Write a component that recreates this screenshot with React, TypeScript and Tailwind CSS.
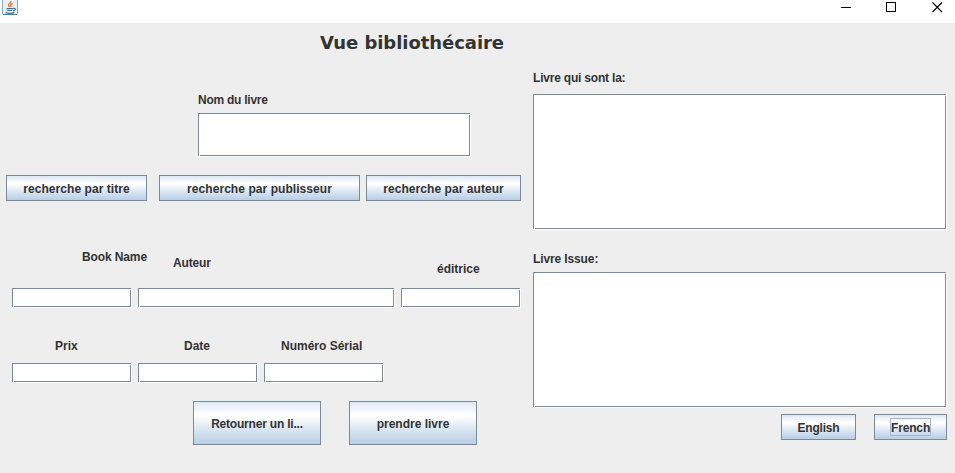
import type { ReactNode } from 'react';

function Label({ className = '', children }: { className?: string; children: ReactNode }) {
  return <span className={`block whitespace-nowrap text-[12px] leading-4 font-bold ${className}`}>{children}</span>;
}

// Bevelled text box: the light edge cuts one pixel out of the dark frame at two corners.
function Field({ className = '' }: { className?: string }) {
  return (
    <div
      className={`relative shrink-0 border border-[#7a8a99] bg-white shadow-[1px_1px_0_#fff] before:absolute before:top-0 before:-right-px before:size-px before:bg-white after:absolute after:-bottom-px after:left-0 after:size-px after:bg-white ${className}`}
    />
  );
}

function MetalButton({ className = '', focused = false, children }: { className?: string; focused?: boolean; children: ReactNode }) {
  return (
    <button
      className={`flex shrink-0 items-center justify-center whitespace-nowrap border border-[#7a8a99] bg-[linear-gradient(to_bottom,#dde8f3_0%,#ffffff_30%,#ffffff_34%,#dde8f3_62%,#b8cfe5_100%)] text-[12px] leading-4 font-bold ${className}`}
    >
      <span className={focused ? 'flex h-[18px] w-[41px] justify-center border border-[#a3b8cc] pt-px' : 'pt-[2px]'}>{children}</span>
    </button>
  );
}

function JavaIcon() {
  return (
    <svg width="16" height="16" viewBox="0 0 16 16" fill="none" className="ml-[2px]">
      <rect x="0.5" y="-2.5" width="15" height="17" rx="1" fill="#eaf0f5" stroke="#8ba6b8" />
      <path d="M1 14.5h14" stroke="#4f7d9c" />
      <path d="M9 1c.6 2-3.200 2.600-2.400 4.400.3.7 1 1 .9 1.800M10.800 3.400c-2.400.9-2.700 2-1.500 3.400" stroke="#e0813f" strokeWidth="1.500" />
      <path d="M4.500 8.600h6.300M5.200 10.500h5M3.500 12.600c2.500.8 6.500.8 9-.2M11 8.400c3.200-.6 3 2.200-.2 2.500" stroke="#47718f" strokeWidth="1.200" />
    </svg>
  );
}

export default function App() {
  return (
    <div className="flex h-[473px] w-[955px] flex-col overflow-hidden bg-[#eeeeee] font-['Liberation_Sans',Arial,sans-serif] text-[#333333]">
      <header className="flex h-[23px] shrink-0 items-start justify-between bg-white">
        <JavaIcon />
        <div className="flex items-start pt-[2px] pr-[12px]">
          <svg width="11" height="10" viewBox="0 0 11 10" shapeRendering="crispEdges">
            <path d="M0 5.500h10" stroke="#000" />
          </svg>
          <svg width="10" height="10" viewBox="0 0 10 10" fill="none" shapeRendering="crispEdges" className="mr-9 ml-[34px]">
            <path d="M.5.5h9v9h-9z" stroke="#000" />
          </svg>
          <svg width="11" height="11" viewBox="0 0 11 11">
            <path d="M.5.5l9.500 9.500M10 .5l-9.500 9.500" stroke="#000" strokeWidth="1.100" />
          </svg>
        </div>
      </header>

      <main className="flex flex-1">
        <section className="flex w-[533px] shrink-0 flex-col">
          <h1 className="mt-2 ml-[320px] h-6 whitespace-nowrap font-['DejaVu_Sans',Verdana,sans-serif] text-[18px] leading-6 font-bold tracking-[-0.05px]">
            Vue bibliothécaire
          </h1>

          <div className="mt-[37px] ml-[198px] flex flex-col gap-[5px]">
            <Label className="tracking-[-0.25px]">Nom du livre</Label>
            <Field className="h-[43px] w-[272px]" />
          </div>

          <div className="mt-[19px] ml-[6px] flex tracking-[0.06px]">
            <MetalButton className="h-[26px] w-[141px]">recherche par titre</MetalButton>
            <MetalButton className="ml-3 h-[26px] w-[201px]">recherche par publisseur</MetalButton>
            <MetalButton className="ml-[6px] h-[26px] w-[155px]">recherche par auteur</MetalButton>
          </div>

          <div className="mt-12 flex h-[39px] items-start pl-[82px]">
            <Label className="w-[91px] tracking-[-0.12px]">Book Name</Label>
            <Label className="w-[264px] pt-[6px] tracking-[-0.15px]">Auteur</Label>
            <Label className="pt-3">éditrice</Label>
          </div>
          <div className="flex gap-[7px] pl-3">
            <Field className="h-[19px] w-[119px]" />
            <Field className="h-[19px] w-[256px]" />
            <Field className="h-[19px] w-[119px]" />
          </div>

          <div className="mt-[31px] flex pl-[55px]">
            <Label className="w-[129px]">Prix</Label>
            <Label className="w-[97px]">Date</Label>
            <Label>Numéro Sérial</Label>
          </div>
          <div className="mt-[9px] flex gap-[7px] pl-3">
            <Field className="h-[19px] w-[119px]" />
            <Field className="h-[19px] w-[119px]" />
            <Field className="h-[19px] w-[119px]" />
          </div>

          <div className="mt-[19px] flex gap-7 pl-[193px]">
            <MetalButton className="h-[44px] w-[128px] tracking-[-0.2px]">Retourner un li...</MetalButton>
            <MetalButton className="h-[44px] w-[128px]">prendre livre</MetalButton>
          </div>
        </section>

        <section className="flex w-[414px] flex-col">
          <Label className="mt-[47px] tracking-[-0.2px]">Livre qui sont la:</Label>
          <Field className="mt-2 h-[135px] w-[413px]" />
          <Label className="mt-[22px] tracking-[-0.12px]">Livre Issue:</Label>
          <Field className="mt-[5px] h-[135px] w-[413px]" />
          <div className="mt-[7px] flex justify-end gap-[18px]">
            <MetalButton className="h-[26px] w-[75px] tracking-[-0.2px]">English</MetalButton>
            <MetalButton focused className="h-[26px] w-[73px] tracking-[-0.15px]">French</MetalButton>
          </div>
        </section>
      </main>
    </div>
  );
}
